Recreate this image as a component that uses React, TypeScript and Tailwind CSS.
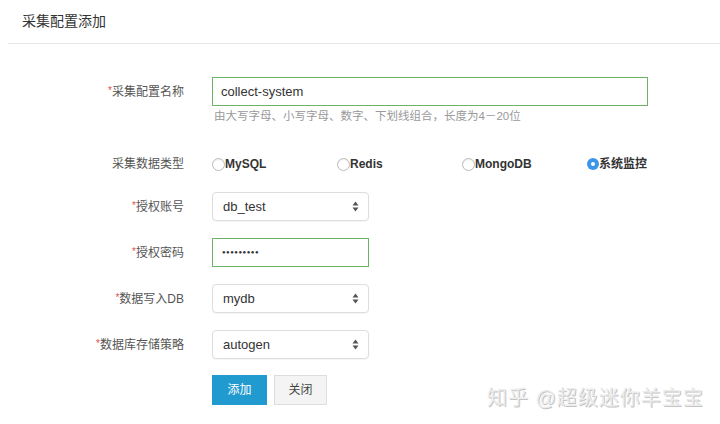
import React from "react";

const font = { fontFamily: '"Liberation Sans", "Noto Sans CJK SC", sans-serif' };

function Label({ text, required = true }: { text: string; required?: boolean }) {
  return (
    <div className="w-[184px] shrink-0 text-right text-[12px] text-[#555]">
      {required && <span className="text-[#d9534f] text-[10px] align-top">*</span>}
      {text}
    </div>
  );
}

function SelectArrows() {
  return (
    <svg width="7" height="11" viewBox="0 0 7 11" className="text-[#555]">
      <path d="M3.5 0.5 L6.5 4.5 L0.5 4.5 Z" fill="currentColor" />
      <path d="M3.5 10.5 L6.5 6.5 L0.5 6.5 Z" fill="currentColor" />
    </svg>
  );
}

function FakeSelect({ value }: { value: string }) {
  return (
    <div className="w-[157px] h-[29px] rounded-[4px] border border-[#ddd] bg-white shadow-[0_1px_1px_rgba(0,0,0,0.04)] flex items-center justify-between pl-[10px] pr-[9px] text-[13px] text-[#333]">
      <span>{value}</span>
      <SelectArrows />
    </div>
  );
}

function Radio({ label, checked = false }: { label: string; checked?: boolean }) {
  return (
    <div className="w-[125px] flex items-center text-[12px] font-bold text-[#333]">
      {checked ? (
        <span className="w-[12px] h-[12px] rounded-full bg-[#3d95e8] flex items-center justify-center">
          <span className="w-[4px] h-[4px] rounded-full bg-white" />
        </span>
      ) : (
        <span className="w-[13px] h-[13px] rounded-full border border-[#bbb] bg-white shadow-[inset_0_1px_1px_rgba(0,0,0,0.08)]" />
      )}
      <span>{label}</span>
    </div>
  );
}

export default function App() {
  const types = ["MySQL", "Redis", "MongoDB", "系统监控"];

  return (
    <div className="relative w-[720px] h-[424px] bg-white overflow-hidden" style={font}>
      {/* Header */}
      <div className="h-[43px] pl-[22px] flex items-center text-[14px] text-[#333]">
        采集配置添加
      </div>
      <div className="ml-[8px] h-px bg-[#e6e6e6]" />

      {/* Form */}
      <div className="pt-[33px] flex flex-col">
        <div className="flex items-center gap-[28px]">
          <Label text="采集配置名称" />
          <div className="w-[436px] h-[29px] border border-[#6cb368] flex items-center px-[8px] text-[13px] text-[#333]">
            collect-system
          </div>
        </div>
        <div className="ml-[214px] mt-[2px] text-[11.5px] text-[#999] leading-[16px]">
          由大写字母、小写字母、数字、下划线组合，长度为4－20位
        </div>

        <div className="mt-[32px] flex items-center gap-[28px] h-[16px]">
          <Label text="采集数据类型" required={false} />
          <div className="flex">
            {types.map((t, i) => (
              <Radio key={t} label={t} checked={i === 3} />
            ))}
          </div>
        </div>

        <div className="mt-[20px] flex items-center gap-[28px]">
          <Label text="授权账号" />
          <FakeSelect value="db_test" />
        </div>

        <div className="mt-[17px] flex items-center gap-[28px]">
          <Label text="授权密码" />
          <div className="w-[157px] h-[29px] border border-[#6cb368] flex items-center px-[9px] text-[6px] tracking-[0.5px] text-[#333]">
            ●●●●●●●●●
          </div>
        </div>

        <div className="mt-[17px] flex items-center gap-[28px]">
          <Label text="数据写入DB" />
          <FakeSelect value="mydb" />
        </div>

        <div className="mt-[17px] flex items-center gap-[28px]">
          <Label text="数据库存储策略" />
          <FakeSelect value="autogen" />
        </div>

        <div className="mt-[16px] ml-[212px] flex gap-[7px]">
          <button className="w-[55px] h-[30px] bg-[#219ad0] text-white text-[12px]">添加</button>
          <button className="w-[53px] h-[30px] bg-[#f4f4f4] border border-[#ddd] text-[#444] text-[12px]">
            关闭
          </button>
        </div>
      </div>

      {/* Watermark */}
      <div className="absolute left-[487px] top-[383px] text-[20px] text-[#ececec] tracking-[1px] [text-shadow:1px_1px_0_#c4c4c4]">
        知乎 @超级迷你羊宝宝
      </div>
    </div>
  );
}
